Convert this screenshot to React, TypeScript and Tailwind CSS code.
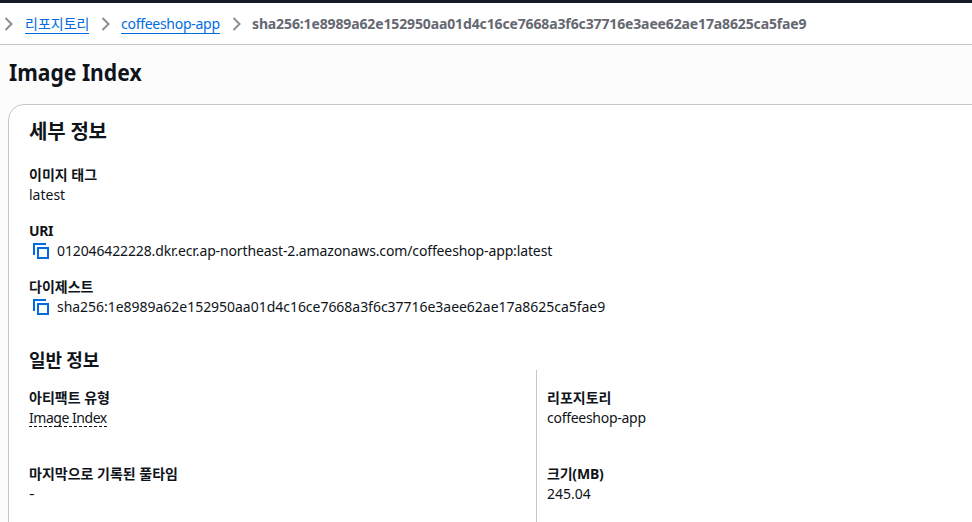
const copy = (
  <svg className="ml-1 mr-2 h-4 w-4 shrink-0" viewBox="0 0 16 16" fill="none" stroke="#006ce0" strokeWidth="2">
    <path d="M1 12V1h12" />
    <path d="M5 5h10v10H5z" />
  </svg>
);
const chevron = (
  <svg className="h-4 w-4 shrink-0" viewBox="0 0 16 16" fill="none" stroke="#8c8c94" strokeWidth="2">
    <path d="m5.5 2 6 6-6 6" />
  </svg>
);

export default function App() {
  return (
    <div className="h-[522px] w-[972px] overflow-hidden bg-[#fcfcfd] font-['Noto_Sans','Noto_Sans_CJK_KR',sans-serif] text-[14px] leading-5 text-[#0f141a]">
      <div className="h-[3px] bg-[#161d26]" />
      <nav className="flex h-[42px] items-center border-b border-[#c6c6cd] bg-white whitespace-nowrap">
        {chevron}
        <a className="mt-px mr-2 ml-[9px] h-[19px] w-16 border-b border-[#006ce0] leading-[18px] text-[#006ce0]">리포지토리</a>
        {chevron}
        <a className="mt-px mr-2 ml-2 h-[19px] w-[99px] border-b border-[#006ce0] leading-[18px] tracking-[-0.28px] text-[#006ce0]">coffeeshop-app</a>
        {chevron}
        <span className="ml-2 font-bold tracking-[-0.13px] text-[#656871]">sha256:1e8989a62e152950aa01d4c16ce7668a3f6c37716e3aee62ae17a8625ca5fae9</span>
      </nav>
      <h1 className="mt-3 mb-[17px] ml-[9px] origin-left scale-x-[0.88] text-[24px] leading-[30px] font-bold">Image Index</h1>
      <main className="ml-2 h-[440px] w-[1000px] rounded-tl-2xl border border-[#c6c6cd] bg-white pt-[15px] pl-5 whitespace-nowrap">
        <h2 className="text-[20px] leading-6 font-bold tracking-[-0.2px]">세부 정보</h2>
        <div className="mt-[21px] font-bold">이미지 태그</div>
        <div>latest</div>
        <div className="mt-4 font-bold tracking-[-0.4px]">URI</div>
        <div className="flex items-center">{copy}<span className="tracking-[-0.13px]">012046422228.dkr.ecr.ap-northeast-2.amazonaws.com/coffeeshop-app:latest</span></div>
        <div className="mt-4 font-bold">다이제스트</div>
        <div className="flex items-center">{copy}<span className="tracking-[-0.03px]">sha256:1e8989a62e152950aa01d4c16ce7668a3f6c37716e3aee62ae17a8625ca5fae9</span></div>
        <h3 className="mt-8 text-[18px] leading-[22px] font-bold tracking-[-0.15px]">일반 정보</h3>
        <div className="-mt-px flex">
          <div className="w-[507px] pt-[18px]">
            <div className="font-bold">아티팩트 유형</div>
            <div className="h-5"><span className="inline-block h-[19px] w-[78px] border-b border-dashed border-[#0f141a] align-top tracking-[-0.46px]">Image Index</span></div>
            <div className="mt-9 font-bold">마지막으로 기록된 풀타임</div>
            <div className="origin-left scale-x-125">-</div>
          </div>
          <div className="h-[180px] border-l border-[#c6c6cd] pt-[18px] pl-2.5">
            <div className="font-bold">리포지토리</div>
            <div className="tracking-[-0.28px]">coffeeshop-app</div>
            <div className="mt-9 font-bold tracking-[-0.2px]">크기(MB)</div>
            <div>245.04</div>
          </div>
        </div>
      </main>
    </div>
  );
}
